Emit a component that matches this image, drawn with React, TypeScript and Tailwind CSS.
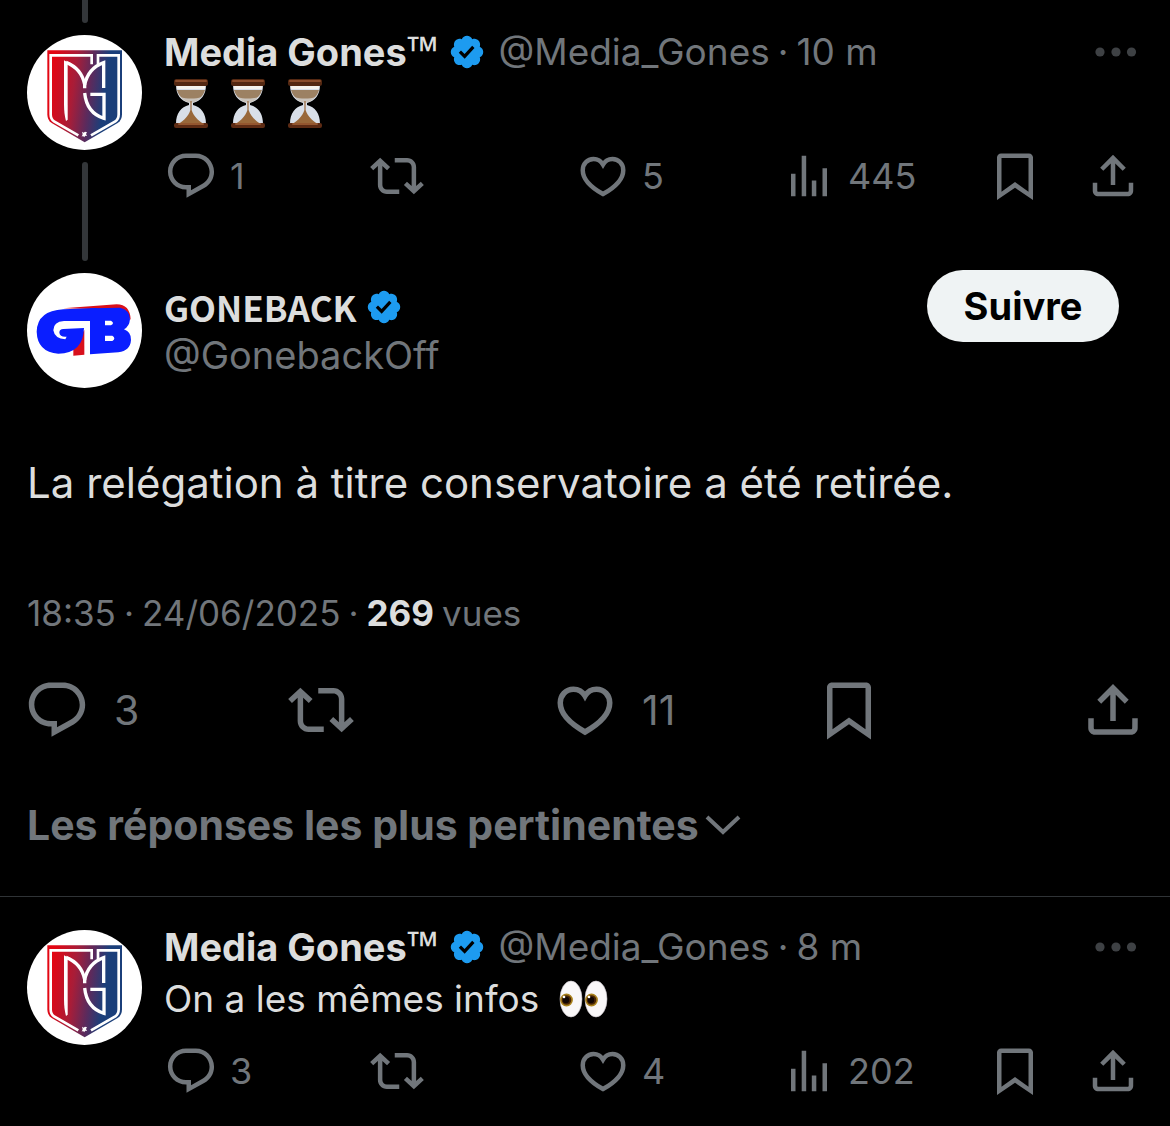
import type { ReactNode } from 'react';

interface IconProps {
  className?: string;
}

const ReplyIcon = ({ className = '' }: IconProps) => (
  <svg viewBox="0 0 24 24" fill="currentColor" className={className} aria-hidden="true">
    <path d="M1.751 10c0-4.42 3.584-8 8.005-8h4.366c4.49 0 8.129 3.64 8.129 8.13 0 2.96-1.607 5.68-4.196 7.11l-8.054 4.46v-3.69h-.067c-4.49.1-8.183-3.51-8.183-8.01zm8.005-6c-3.317 0-6.005 2.69-6.005 6 0 3.37 2.77 6.08 6.138 6.01l.351-.01h1.761v2.3l5.087-2.81c1.951-1.08 3.163-3.13 3.163-5.36 0-3.39-2.744-6.13-6.129-6.13H9.756z" />
  </svg>
);

const RepostIcon = ({ className = '' }: IconProps) => (
  <svg viewBox="0 0 24 24" fill="currentColor" className={className} aria-hidden="true">
    <path d="M4.5 3.88l4.432 4.14-1.364 1.46L5.5 7.55V16c0 1.1.896 2 2 2H13v2H7.5c-2.209 0-4-1.79-4-4V7.55L1.432 9.48.068 8.02 4.5 3.88zM16.5 6H11V4h5.5c2.209 0 4 1.79 4 4v8.45l2.068-1.93 1.364 1.46-4.432 4.14-4.432-4.14 1.364-1.46 2.068 1.93V8c0-1.1-.896-2-2-2z" />
  </svg>
);

const LikeIcon = ({ className = '' }: IconProps) => (
  <svg viewBox="0 0 24 24" fill="none" stroke="currentColor" strokeWidth="2" className={className} aria-hidden="true">
    <path d="M12 6.9C11 5.2 9.5 4.45 7.8 4.45 5 4.45 3 6.7 3 9.4c0 4.1 4 7.8 9 10.6 5-2.8 9-6.5 9-10.6 0-2.7-2-4.95-4.8-4.95-1.7 0-3.2.75-4.2 2.45z" />
  </svg>
);

const ViewsIcon = ({ className = '' }: IconProps) => (
  <svg viewBox="0 0 24 24" fill="currentColor" className={className} aria-hidden="true">
    <path d="M8.75 21V3h2v18h-2zM18 21V8.5h2V21h-2zM4 21V11h2v10H4zm9.248 0v-7h2v7h-2z" />
  </svg>
);

const BookmarkIcon = ({ className = '' }: IconProps) => (
  <svg viewBox="0 0 24 24" fill="currentColor" className={className} aria-hidden="true">
    <path d="M4 3.8C4 2.8 4.8 2 5.8 2h12.4c1 0 1.8.8 1.8 1.8v18.9l-8-5.5-8 5.5V3.8zM6 4v15l6-4.3 6 4.3V4H6z" />
  </svg>
);

const ShareIcon = ({ className = '' }: IconProps) => (
  <svg viewBox="0 0 24 24" fill="currentColor" className={className} aria-hidden="true">
    <path d="M12 2.59l5.7 5.7-1.41 1.42L13 6.41V16h-2V6.41l-3.3 3.3-1.41-1.42L12 2.59zM21 15l-.02 3.51c0 1.38-1.12 2.49-2.5 2.49H5.5C4.11 21 3 19.88 3 18.5V15h2v3.5c0 .28.22.5.5.5h12.98c.28 0 .5-.22.5-.5L19 15h2z" />
  </svg>
);

const VerifiedIcon = () => (
  <svg viewBox="0 0 22 22" fill="#1d9bf0" className="size-[38px] shrink-0" role="img" aria-label="Compte certifié">
    <path d="M20.396 11c-.018-.646-.215-1.275-.57-1.816-.354-.54-.852-.972-1.438-1.246.223-.607.27-1.264.14-1.897-.131-.634-.437-1.218-.882-1.687-.47-.445-1.053-.75-1.687-.882-.633-.13-1.29-.083-1.897.14-.273-.587-.704-1.086-1.245-1.44S11.647 1.62 11 1.604c-.646.017-1.273.213-1.813.568s-.969.854-1.24 1.44c-.608-.223-1.267-.272-1.902-.14-.635.13-1.22.436-1.69.882-.445.47-.749 1.055-.878 1.688-.13.633-.08 1.29.144 1.896-.587.274-1.087.705-1.443 1.245-.356.54-.555 1.17-.574 1.817.02.647.218 1.276.574 1.817.356.54.856.972 1.443 1.245-.224.606-.274 1.263-.144 1.896.13.634.433 1.218.877 1.688.47.443 1.054.747 1.687.878.633.132 1.29.084 1.897-.136.274.586.705 1.084 1.246 1.439.54.354 1.17.551 1.816.569.647-.016 1.276-.213 1.817-.567s.972-.854 1.245-1.44c.604.239 1.266.296 1.903.164.636-.132 1.22-.447 1.68-.907.46-.46.776-1.044.908-1.681s.075-1.299-.165-1.903c.586-.274 1.084-.705 1.439-1.246.354-.54.551-1.17.569-1.816zM9.662 14.85l-3.429-3.428 1.293-1.302 2.072 2.072 4.4-4.794 1.347 1.246z" />
  </svg>
);

const Hourglass = () => (
  <svg viewBox="0 0 34 50" className="h-[50px] w-[34px]" role="img" aria-label="Sablier">
    <path d="M2 6h30c0 10-5 16-13 18v2c8 2 13 8 13 19H2c0-11 5-17 13-19v-2C7 22 2 16 2 6z" fill="#d9dfe8" />
    <path d="M3 11h28c-2 7-6 10-14 11C9 21 5 18 3 11z" fill="#9c8163" />
    <path d="M7 18c3 4 6 5 10 6 4-1 7-2 10-6-4 2-16 2-20 0z" fill="#c9c3bc" />
    <path d="M16.4 22h1.2v9c2 6 6 10 12 14H4.4c6-4 10-8 12-14z" fill="#99683a" />
    <rect x="3" y="7" width="28" height="3" rx="1" fill="#f6f3ee" />
    <rect x="0" y="0" width="34" height="7" rx="2.5" fill="#542812" />
    <rect x="1" y="1" width="32" height="2" rx="1" fill="#8a4c2b" />
    <rect x="0" y="44" width="34" height="5" rx="2" fill="#5d2b14" />
    <rect x="4" y="44" width="26" height="2" rx="1" fill="#94562f" />
  </svg>
);

const Eyes = () => (
  <svg viewBox="0 0 50 40" className="h-[40px] w-[50px]" role="img" aria-label="Yeux">
    <g fill="#f9f7f8" stroke="#c9c3c9" strokeWidth="0.6">
      <ellipse cx="12" cy="20" rx="11" ry="18" />
      <ellipse cx="37" cy="20" rx="11" ry="18" />
    </g>
    <g fill="#4a2606" stroke="#a9811c" strokeWidth="1.6">
      <circle cx="7.5" cy="21" r="5.6" />
      <circle cx="32.5" cy="21" r="5.6" />
    </g>
    <g fill="#120603">
      <circle cx="7" cy="21" r="3.2" />
      <circle cx="32" cy="21" r="3.2" />
    </g>
    <g fill="#fff">
      <circle cx="5" cy="18" r="1.3" />
      <circle cx="30" cy="18" r="1.3" />
    </g>
  </svg>
);

// Shield crest of Media Gones
const MediaGonesAvatar = () => (
  <svg viewBox="0 0 345 345" className="size-[115px] shrink-0 rounded-full bg-white" role="img" aria-label="Media Gones">
    <defs>
      <linearGradient id="crest" x1="0" x2="1" y1="0" y2="0.15">
        <stop offset="0.1" stopColor="#e30613" />
        <stop offset="0.4" stopColor="#a81d38" />
        <stop offset="0.62" stopColor="#5c2a5c" />
        <stop offset="0.82" stopColor="#1b3f7a" />
      </linearGradient>
    </defs>
    <path d="M61 46h224v192q0 18-13 26l-99 58-99-58q-13-8-13-26z" fill="url(#crest)" />
    <g fill="none" stroke="#fff">
      <path d="M194 88V61H71v177q0 15 10 21l73 42" strokeWidth="8" />
      <path d="M213 88V61h62v177q0 15-10 21l-73 42" strokeWidth="8" />
      <path d="M173 160v-12q-10-48-56-66" strokeWidth="10" />
      <path d="M173 150q10-50 57-67v76" strokeWidth="10" />
      <path d="M190 178h41v72q-52-16-58-76" strokeWidth="10" />
    </g>
    <path d="M111 76l11 6v172l-5 4q-6-20-6-50z" fill="#fff" />
    <path d="M165 290l5 3 4-3 6 2-3 5 3 6-6-1-2 5-4-4-4 2 3-7z" fill="#fff" />
  </svg>
);

const GonebackAvatar = () => (
  <svg viewBox="81 39 345 345" className="size-[115px] shrink-0 rounded-full bg-white" role="img" aria-label="Goneback">
    <g fill="#d8101c">
      <path d="M190 145l160-12q40 0 42 46l-14-14-20-16z" />
      <path d="M253 210v74l-33 3v-30z" />
    </g>
    <g fill="#0a1eff" fillRule="evenodd">
      <path d="M190 148l100-4v39H192q-32 2-32 28 4 25 36 27l4-8q-20 2-22-12 0-11 12-11l62-3q-2 76-77 77-63-5-65-66 2-63 80-67z" />
      <path d="M270 145l90-2q30 7 30 35-2 22-18 30 22 8 21 32-2 32-38 37l-85 6zM315 182v14h18q12-7 0-14zM315 227v16h22q12-8 0-16z" />
    </g>
  </svg>
);

interface ActionProps {
  label: string;
  icon: ReactNode;
  count?: string;
  large?: boolean;
}

function Action({ label, icon, count, large = false }: ActionProps) {
  return (
    <button
      type="button"
      aria-label={label}
      className={`flex items-center ${large ? 'gap-6 text-[41px]' : 'gap-3 text-[36px]'} leading-none`}
    >
      {icon}
      {count && <span>{count}</span>}
    </button>
  );
}

interface PostProps {
  time: string;
  replies: string;
  likes: string;
  views: string;
  threaded?: boolean;
  children: ReactNode;
}

function Post({ time, replies, likes, views, threaded = false, children }: PostProps) {
  return (
    <article className="flex gap-[22px] pr-[30px] pl-[27px]">
      <div className="flex flex-col items-center gap-3">
        {threaded && <div className="h-[23px] w-1.5 rounded-b-full bg-[#333639]" />}
        <MediaGonesAvatar />
        {threaded && <div className="w-1.5 flex-1 rounded-full bg-[#333639]" />}
      </div>
      <div className={`min-w-0 flex-1 ${threaded ? 'pt-[26px] pb-[58px]' : '-mt-[9px] pb-7'}`}>
        <div className="flex h-[52px] items-center text-[38px] whitespace-nowrap">
          <a href="#media-gones" className="font-bold text-[#dcdddd]">
            Media Gones
            <span className="font-['Noto_Sans',sans-serif] text-[41px] leading-none">™</span>
          </a>
          <span className="mr-3 ml-2.5">
            <VerifiedIcon />
          </span>
          <div className="flex gap-2 text-[37px]">
            <span>@Media_Gones</span>
            <span>·</span>
            <span>{time}</span>
          </div>
          <button type="button" aria-label="Plus" className="ml-auto text-[#3e4144]">
            <svg viewBox="0 0 48 12" fill="currentColor" className="h-3 w-12" aria-hidden="true">
              <circle cx="8" cy="6" r="4.6" />
              <circle cx="24" cy="6" r="4.6" />
              <circle cx="39.5" cy="6" r="4.6" />
            </svg>
          </button>
        </div>
        <div className="flex h-[52px] items-center text-[37px] text-[#dcdddd]">{children}</div>
        <div className="mt-[19px] flex">
          <div className="grid flex-1 grid-cols-4">
            <Action label="Répondre" count={replies} icon={<ReplyIcon className="size-[54px]" />} />
            <Action label="Reposter" icon={<RepostIcon className="size-[54px]" />} />
            <Action label="J'aime" count={likes} icon={<LikeIcon className="size-[54px]" />} />
            <Action label="Vues" count={views} icon={<ViewsIcon className="size-[54px]" />} />
          </div>
          <div className="flex gap-11">
            <Action label="Signet" icon={<BookmarkIcon className="size-[54px]" />} />
            <Action label="Partager" icon={<ShareIcon className="size-[54px]" />} />
          </div>
        </div>
      </div>
    </article>
  );
}

export default function App() {
  return (
    <main className="min-h-screen overflow-hidden bg-black font-['Inter',sans-serif] text-[#71767b]">
      <Post time="10 m" replies="1" likes="5" views="445" threaded>
        <div className="flex gap-[23px] pl-2.5">
          <Hourglass />
          <Hourglass />
          <Hourglass />
        </div>
      </Post>

      <article className="pt-[9px]">
        <header className="flex items-start justify-between pr-[51px] pl-[27px]">
          <div className="flex items-center gap-[22px] pt-[3px]">
            <GonebackAvatar />
            <div className="text-[38px] leading-[48px]">
              <div className="flex h-12 items-center gap-2">
                <a
                  href="#goneback"
                  className="font-['Noto_Sans_CJK_SC',sans-serif] text-[35px] leading-[46px] font-bold text-[#dcdddd]"
                >
                  GONEBACK
                </a>
                <VerifiedIcon />
              </div>
              <p>@GonebackOff</p>
            </div>
          </div>
          <button
            type="button"
            className="h-[72px] w-48 rounded-full bg-[#eff3f4] text-[38px] font-bold text-black"
          >
            Suivre
          </button>
        </header>
        <p className="mt-[67px] px-[27px] text-[42px] leading-[56px] text-[#dcdddd]">
          La relégation à titre conservatoire a été retirée.
        </p>
        <p className="mt-[78px] flex gap-2 px-[27px] text-[35px] leading-[48px]">
          <span>18:35</span>
          <span>·</span>
          <span>24/06/2025</span>
          <span>·</span>
          <strong className="text-[#dcdddd]">269</strong>
          <span>vues</span>
        </p>
        <div className="mt-10 flex px-6">
          <div className="grid flex-1 grid-cols-4">
            <Action large label="Répondre" count="3" icon={<ReplyIcon className="size-[66px]" />} />
            <Action large label="Reposter" icon={<RepostIcon className="size-[66px]" />} />
            <Action large label="J'aime" count="11" icon={<LikeIcon className="size-[66px]" />} />
            <Action large label="Signet" icon={<BookmarkIcon className="size-[66px]" />} />
          </div>
          <Action large label="Partager" icon={<ShareIcon className="size-[66px]" />} />
        </div>
      </article>

      <div className="mt-[54px] mb-[33px] border-b border-[#2f3336] px-[27px] pb-[43px]">
        <button type="button" className="flex items-center gap-1.5 text-[41px] leading-[56px] font-bold">
          Les réponses les plus pertinentes
          <svg viewBox="0 0 36 22" fill="none" stroke="currentColor" strokeWidth="4" className="h-[22px] w-9" aria-hidden="true">
            <path d="M2 3l16 15L34 3" />
          </svg>
        </button>
      </div>

      <Post time="8 m" replies="3" likes="4" views="202">
        <span className="mr-5">On a les mêmes infos</span>
        <Eyes />
      </Post>
    </main>
  );
}
